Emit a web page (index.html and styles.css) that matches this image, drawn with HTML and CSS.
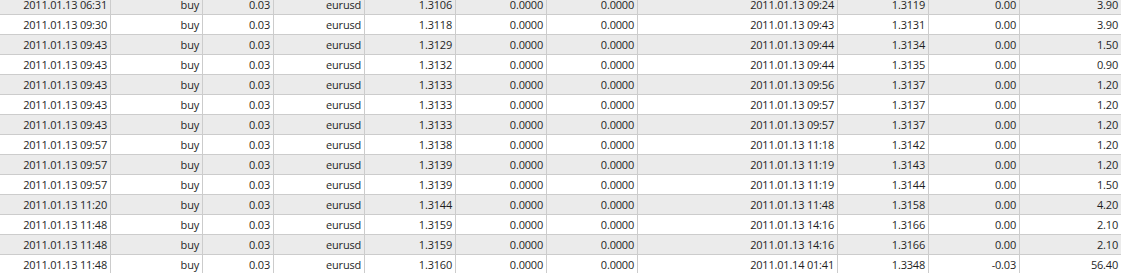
FILE: index.html
```html
<!DOCTYPE html>
<html>
<head>
<meta charset="utf-8">
<link rel="stylesheet" href="styles.css">
</head>
<body>
<div class="grid">
  <div class="row alt"><span>2011.01.13 06:31</span><span>buy</span><span>0.03</span><span>eurusd</span><span>1.3106</span><span>0.0000</span><span>0.0000</span><span>2011.01.13 09:24</span><span>1.3119</span><span>0.00</span><span>3.90</span></div>
  <div class="row"><span>2011.01.13 09:30</span><span>buy</span><span>0.03</span><span>eurusd</span><span>1.3118</span><span>0.0000</span><span>0.0000</span><span>2011.01.13 09:43</span><span>1.3131</span><span>0.00</span><span>3.90</span></div>
  <div class="row alt"><span>2011.01.13 09:43</span><span>buy</span><span>0.03</span><span>eurusd</span><span>1.3129</span><span>0.0000</span><span>0.0000</span><span>2011.01.13 09:44</span><span>1.3134</span><span>0.00</span><span>1.50</span></div>
  <div class="row"><span>2011.01.13 09:43</span><span>buy</span><span>0.03</span><span>eurusd</span><span>1.3132</span><span>0.0000</span><span>0.0000</span><span>2011.01.13 09:44</span><span>1.3135</span><span>0.00</span><span>0.90</span></div>
  <div class="row alt"><span>2011.01.13 09:43</span><span>buy</span><span>0.03</span><span>eurusd</span><span>1.3133</span><span>0.0000</span><span>0.0000</span><span>2011.01.13 09:56</span><span>1.3137</span><span>0.00</span><span>1.20</span></div>
  <div class="row"><span>2011.01.13 09:43</span><span>buy</span><span>0.03</span><span>eurusd</span><span>1.3133</span><span>0.0000</span><span>0.0000</span><span>2011.01.13 09:57</span><span>1.3137</span><span>0.00</span><span>1.20</span></div>
  <div class="row alt"><span>2011.01.13 09:43</span><span>buy</span><span>0.03</span><span>eurusd</span><span>1.3133</span><span>0.0000</span><span>0.0000</span><span>2011.01.13 09:57</span><span>1.3137</span><span>0.00</span><span>1.20</span></div>
  <div class="row"><span>2011.01.13 09:57</span><span>buy</span><span>0.03</span><span>eurusd</span><span>1.3138</span><span>0.0000</span><span>0.0000</span><span>2011.01.13 11:18</span><span>1.3142</span><span>0.00</span><span>1.20</span></div>
  <div class="row alt"><span>2011.01.13 09:57</span><span>buy</span><span>0.03</span><span>eurusd</span><span>1.3139</span><span>0.0000</span><span>0.0000</span><span>2011.01.13 11:19</span><span>1.3143</span><span>0.00</span><span>1.20</span></div>
  <div class="row"><span>2011.01.13 09:57</span><span>buy</span><span>0.03</span><span>eurusd</span><span>1.3139</span><span>0.0000</span><span>0.0000</span><span>2011.01.13 11:19</span><span>1.3144</span><span>0.00</span><span>1.50</span></div>
  <div class="row alt"><span>2011.01.13 11:20</span><span>buy</span><span>0.03</span><span>eurusd</span><span>1.3144</span><span>0.0000</span><span>0.0000</span><span>2011.01.13 11:48</span><span>1.3158</span><span>0.00</span><span>4.20</span></div>
  <div class="row"><span>2011.01.13 11:48</span><span>buy</span><span>0.03</span><span>eurusd</span><span>1.3159</span><span>0.0000</span><span>0.0000</span><span>2011.01.13 14:16</span><span>1.3166</span><span>0.00</span><span>2.10</span></div>
  <div class="row alt"><span>2011.01.13 11:48</span><span>buy</span><span>0.03</span><span>eurusd</span><span>1.3159</span><span>0.0000</span><span>0.0000</span><span>2011.01.13 14:16</span><span>1.3166</span><span>0.00</span><span>2.10</span></div>
  <div class="row"><span>2011.01.13 11:48</span><span>buy</span><span>0.03</span><span>eurusd</span><span>1.3160</span><span>0.0000</span><span>0.0000</span><span>2011.01.14 01:41</span><span>1.3348</span><span>-0.03</span><span>56.40</span></div>
</div>
</body>
</html>
```

FILE: styles.css
```css
html, body {
  margin: 0;
  padding: 0;
  background: #ffffff;
  overflow: hidden;
}
.grid {
  margin-top: -5px;
  font-family: "Open Sans", "Noto Sans", sans-serif;
  font-size: 11px;
  letter-spacing: -0.2px;
  color: #1f1f1f;
}
.row {
  display: grid;
  grid-template-columns: 111px 92px 71px 91px 91px 91px 91px 200px 91px 91px 102px;
  height: 20px;
  background: #ffffff;
}
.row.alt {
  background: #ebebeb;
}
.row span {
  box-sizing: border-box;
  height: 20px;
  border-right: 1px solid #cccccc;
  border-bottom: 1px solid #cccccc;
  text-align: right;
  padding-right: 3px;
  line-height: 19px;
  white-space: nowrap;
  overflow: hidden;
}
.row span:last-child {
  border-right: none;
  padding-right: 4px;
}
```
